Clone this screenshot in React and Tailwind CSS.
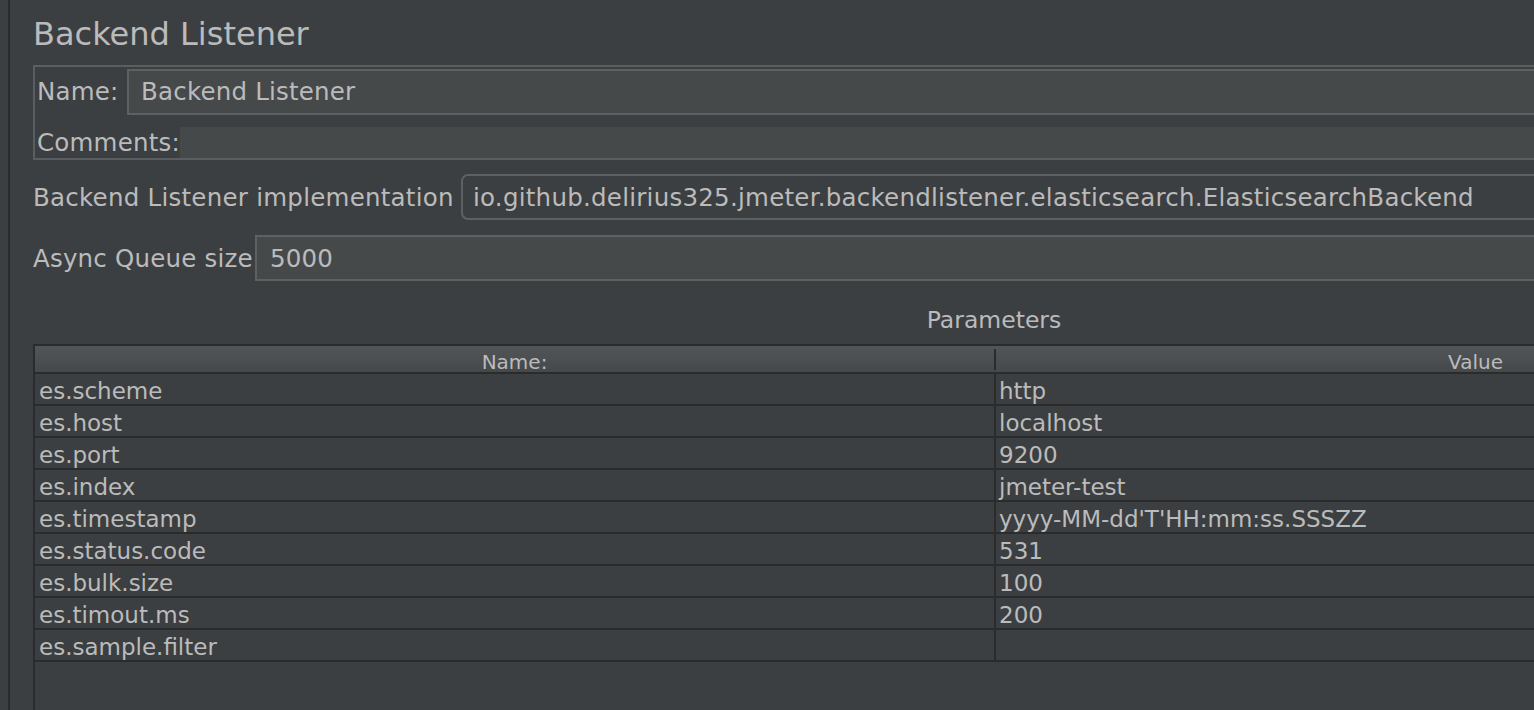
import React from 'react';

const rows = [
  ['es.scheme', 'http'],
  ['es.host', 'localhost'],
  ['es.port', '9200'],
  ['es.index', 'jmeter-test'],
  ['es.timestamp', "yyyy-MM-dd'T'HH:mm:ss.SSSZZ"],
  ['es.status.code', '531'],
  ['es.bulk.size', '100'],
  ['es.timout.ms', '200'],
  ['es.sample.filter', ''],
];

const font = { fontFamily: '"DejaVu Sans", "Liberation Sans", sans-serif' };

export default function App() {
  return (
    <div
      className="w-[1534px] h-[710px] bg-[#3c3f41] text-[#bbbbbb] overflow-hidden flex"
      style={font}
    >
      <div className="w-[8px] shrink-0" />
      <div className="w-[2px] shrink-0 bg-[#2b2b2b]" />
      <div className="w-[1945px] shrink-0 pl-[23px] flex flex-col">
        {/* title */}
        <div className="pt-[16px] h-[52px] text-[32px] leading-[36px]">Backend Listener</div>

        {/* name / comments panel */}
        <div className="mt-[13px] border-2 border-r-0 border-[#5b5e60] pt-[2px] flex flex-col text-[24.5px] tracking-[0.2px] leading-none">
          <div className="flex items-center h-[46px]">
            <div className="w-[92px] pl-[2px] pt-[1px]">Name:</div>
            <div className="flex-1 h-[46px] border-2 border-r-0 border-[#5e6162] bg-[#45494a] flex items-center pl-[12px] pt-[1px]">
              Backend Listener
            </div>
          </div>
          <div className="flex items-center h-[43px] pt-[11px]">
            <div className="w-[145px] pl-[2px] pt-[2px]">Comments:</div>
            <div className="flex-1 h-[31px] bg-[#45494a]" />
          </div>
        </div>

        {/* implementation */}
        <div className="mt-[14px] flex items-center h-[46px] text-[24.5px] tracking-[0.25px] leading-none">
          <div className="w-[428px] pt-[2px]">Backend Listener implementation</div>
          <div className="flex-1 h-[46px] border-2 border-r-0 border-[#5e6162] rounded-l-[7px] flex items-center pl-[10px] pt-[2px]">
            io.github.delirius325.jmeter.backendlistener.elasticsearch.ElasticsearchBackend
          </div>
        </div>

        {/* async queue */}
        <div className="mt-[15px] flex items-center h-[46px] text-[24.5px] tracking-[0.2px] leading-none">
          <div className="w-[222px] pt-[2px]">Async Queue size</div>
          <div className="flex-1 h-[46px] border-2 border-r-0 border-[#5e6162] bg-[#45494a] flex items-center pl-[13px] pt-[2px]">
            5000
          </div>
        </div>

        {/* parameters */}
        <div className="mt-[21px] h-[38px] flex items-center justify-center text-[23.5px] leading-none">
          Parameters
        </div>

        <div className="mt-[4px] flex-1 border-t-2 border-l-2 border-[#2b2b2b] flex flex-col">
          <div className="flex h-[28px] border-b-2 border-[#2b2b2b] bg-gradient-to-b from-[#515557] to-[#45494b] text-[20px] leading-none">
            <div className="w-[959px] flex items-center justify-center pt-[5px]">Name:</div>
            <div className="flex items-center py-[3px]">
              <div className="w-[2px] h-[21px] bg-[#2b2b2b]" />
            </div>
            <div className="flex-1 flex items-center justify-center pt-[5px]">Value</div>
          </div>
          {rows.map(([k, v]) => (
            <div key={k} className="flex h-[32px] border-b-2 border-[#2b2b2b] text-[23px] leading-none">
              <div className="w-[959px] flex items-center pl-[4px] pt-[4px]">{k}</div>
              <div className="w-[2px] bg-[#2b2b2b]" />
              <div className="flex-1 flex items-center pl-[3px] pt-[4px]">{v}</div>
            </div>
          ))}
        </div>
      </div>
    </div>
  );
}
